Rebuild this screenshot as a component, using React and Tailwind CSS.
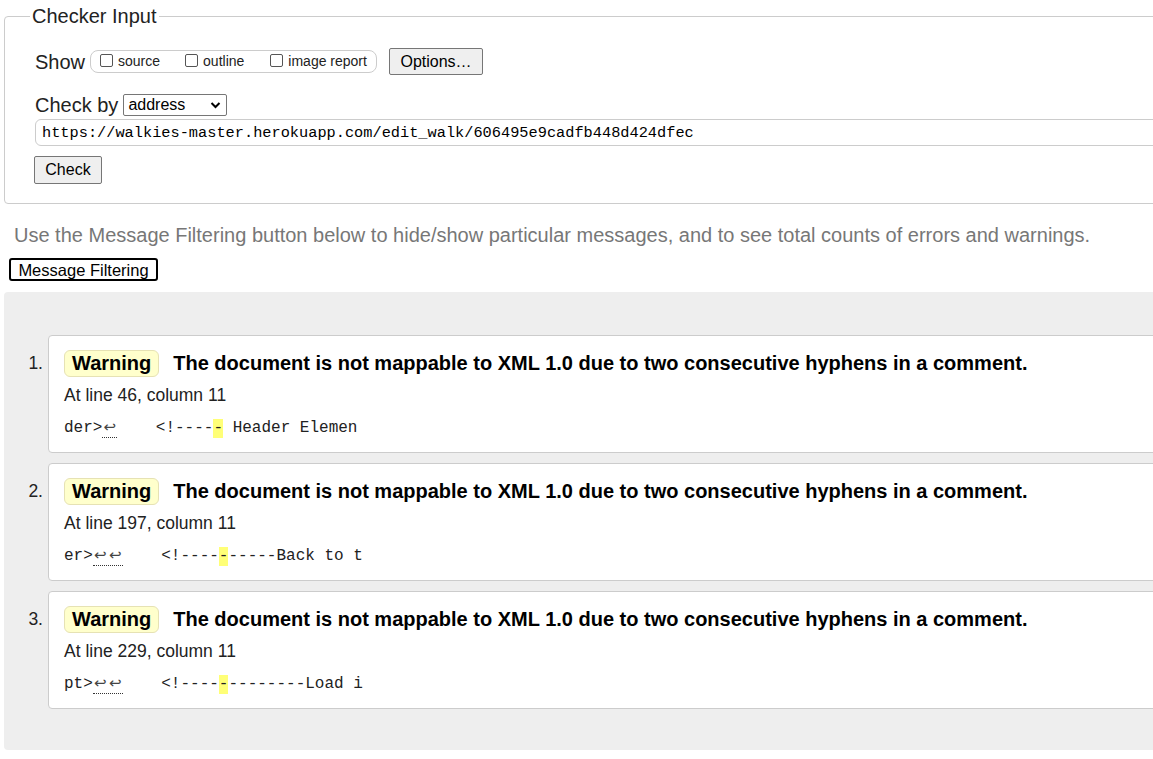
import React from 'react';

const messages = [
  {
    num: '1.',
    line: 'At line 46, column 11',
    before: 'der>',
    breaks: 1,
    pre: '<!----',
    post: ' Header Elemen',
  },
  {
    num: '2.',
    line: 'At line 197, column 11',
    before: 'er>',
    breaks: 2,
    pre: '<!----',
    post: '-----Back to t',
  },
  {
    num: '3.',
    line: 'At line 229, column 11',
    before: 'pt>',
    breaks: 2,
    pre: '<!----',
    post: '--------Load i',
  },
];

const Checkbox = ({ label }) => (
  <span className="flex items-center">
    <span className="w-[13px] h-[13px] border border-[#555] rounded-[2px] bg-white mt-[-2px]"></span>
    <span className="ml-[5px] text-[14px] text-[#222]">{label}</span>
  </span>
);

const MessageCard = ({ msg }) => (
  <li className="flex">
    <div className="w-[44px] shrink-0 text-right pr-[5px] pt-[18px] text-[17.5px] leading-[20px] text-[#222]">{msg.num}</div>
    <div className="flex-1 bg-white border border-[#ccc] rounded-[4px] px-[15px] pt-[14px] pb-[14px]">
      <div className="flex items-center h-[27px]">
        <span className="h-[27px] flex items-center px-[7px] bg-[#ffffcc] border border-[#e6e2b4] rounded-[6px] text-[20px] font-bold text-black">
          Warning
        </span>
        <span className="ml-[14px] text-[20px] font-bold text-black">
          The document is not mappable to XML 1.0 due to two consecutive hyphens in a comment.
        </span>
      </div>
      <p className="mt-[8px] text-[17.5px] leading-[20px] text-[#222]">{msg.line}</p>
      <div className="mt-[14px] h-[19px] flex items-center text-[16px] leading-[19px] text-[#222] whitespace-pre" style={{ fontFamily: '"Liberation Mono", "DejaVu Sans Mono", monospace' }}>
        <span>{msg.before}</span>
        <span className="flex h-[19px] items-center border-b border-dotted border-[#333]" style={{ fontFamily: '"DejaVu Sans", sans-serif' }}>
          {Array.from({ length: msg.breaks }).map((_, i) => (
            <span key={i} className="w-[15px] text-[15px] leading-none text-center text-[#444]">↩</span>
          ))}
        </span>
        <span>{'    '}{msg.pre}</span>
        <span className="bg-[#ffff77]">-</span>
        <span>{msg.post}</span>
      </div>
    </div>
  </li>
);

const App = () => {
  return (
    <div className="w-[1153px] h-[759px] overflow-hidden bg-white" style={{ fontFamily: '"Liberation Sans", Arial, sans-serif' }}>
      <div className="w-[1300px]">
        <fieldset className="mt-[5px] ml-[4px] border border-[#ccc] rounded-[4px] pl-[30px] pb-[19px]">
          <legend className="-ml-[5px] px-[2px] text-[20px] leading-[23px] text-[#222]">Checker Input</legend>

          <div className="flex items-center h-[27px] mt-[20px]">
            <span className="text-[20px] text-[#222]">Show</span>
            <div className="ml-[5px] flex items-center h-[23px] w-[287px] border border-[#ccc] rounded-[8px] pl-[9px]">
              <Checkbox label="source" />
              <span className="ml-[25px]"><Checkbox label="outline" /></span>
              <span className="ml-[26px]"><Checkbox label="image report" /></span>
            </div>
            <button className="ml-[12px] h-[27px] w-[94px] bg-[#efefef] border border-[#767676] rounded-[2px] text-[16px] text-black">
              Options…
            </button>
          </div>

          <div className="flex items-center h-[23px] mt-[18px]">
            <span className="text-[20px] text-[#222]">Check by</span>
            <div className="ml-[5px] flex items-center justify-between h-[22px] w-[104px] border border-[#767676] rounded-[2px] pl-[4px] pr-[5px] text-[16px] text-black">
              <span>address</span>
              <svg width="11" height="8" viewBox="0 0 11 8" fill="none">
                <path d="M1.5 2 L5.5 6 L9.5 2" stroke="#000" strokeWidth="2" />
              </svg>
            </div>
          </div>

          <div className="mt-[3px] h-[27px] border border-[#ccc] rounded-[6px] flex items-center pl-[6px] pt-[2px] text-[15.3px] text-black" style={{ fontFamily: '"Liberation Mono", "DejaVu Sans Mono", monospace' }}>
            https://walkies-master.herokuapp.com/edit_walk/606495e9cadfb448d424dfec
          </div>

          <button className="mt-[10px] -ml-[1px] h-[28px] w-[68px] bg-[#efefef] border border-[#767676] rounded-[2px] text-[16px] text-black">
            Check
          </button>
        </fieldset>

        <p className="mt-[20px] ml-[14px] text-[20px] leading-[23px] text-[#777]">
          Use the Message Filtering button below to hide/show particular messages, and to see total counts of errors and warnings.
        </p>

        <button className="mt-[11px] ml-[9px] h-[23px] w-[149px] bg-white border-2 border-black rounded-[3px] text-[16.5px] text-black leading-[18px]">
          Message Filtering
        </button>

        <div className="mt-[9px] ml-[4px] bg-[#eeeeee] rounded-[4px] pt-[43px] pb-[41px]">
          <ol className="flex flex-col gap-[10px]">
            {messages.map((msg, index) => (
              <MessageCard key={index} msg={msg} />
            ))}
          </ol>
        </div>
      </div>
    </div>
  );
};

export default App;
